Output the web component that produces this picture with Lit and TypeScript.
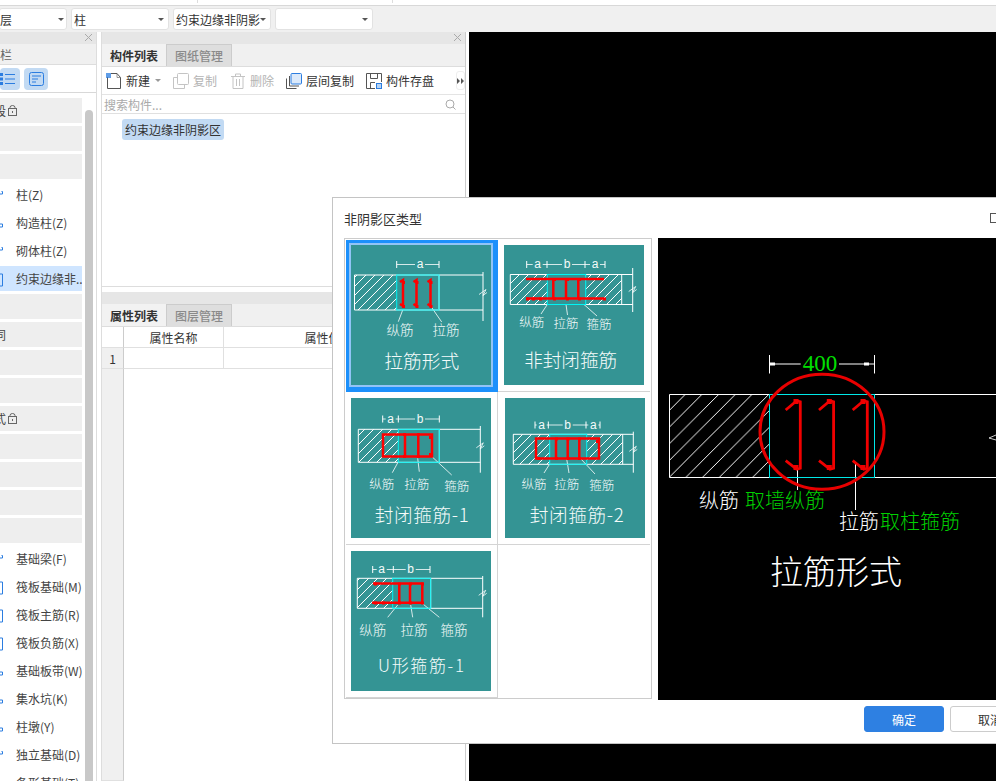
import { LitElement, html, svg, css } from 'lit';
import { customElement, property } from 'lit/decorators.js';

type Seg = [number, number, number, number];

interface Thumb {
  dimY: number;
  ticks: number[];
  dimLabels: [string, number][];
  top: number;
  bottom: number;
  left: number;
  wallEnd: number;
  cutX: number;
  cutTop: number;
  cutBottom: number;
  hatch: [number, number][];
  cyan: [number, number];
  red: string;
  dots: [number, number][];
  leaders: Seg[];
  labels: [string, number, number][];
  labelSize: number;
  title: string;
  titleX: number;
  titleY: number;
  titleSize: number;
  titleWidth: number;
}

const THUMBS: Thumb[] = [
  {
    dimY: 19.5,
    ticks: [45.7, 88],
    dimLabels: [['a', 69]],
    top: 30, bottom: 65, left: 3.5, wallEnd: 88, cutX: 132, cutTop: 27, cutBottom: 76,
    hatch: [[3.5, 45.7]],
    cyan: [45.7, 88],
    red: 'M49 37l3-2v26l-3-2M62.5 37l3-2v26l-3-2M76.5 37l3-2v26l-3-2',
    dots: [[51, 36], [64.5, 36], [78.5, 36], [51, 60], [64.5, 60], [78.5, 60]],
    leaders: [[51.7, 65, 47.3, 76.7], [79.7, 61, 90.7, 77]],
    labels: [['纵筋', 49, 85], ['拉筋', 95, 85]],
    labelSize: 13.5,
    title: '拉筋形式', titleX: 70.7, titleY: 116.5, titleSize: 18.7, titleWidth: 75,
  },
  {
    dimY: 19.5,
    ticks: [22.7, 43, 81, 101],
    dimLabels: [['a', 33.7], ['b', 63], ['a', 91]],
    top: 29.5, bottom: 59.5, left: 6.3, wallEnd: 117.7, cutX: 128.7, cutTop: 23, cutBottom: 67,
    hatch: [[6.3, 43.3], [81.7, 117.7]],
    cyan: [43.3, 81.7],
    red: 'M22 34H100M22 53.5H100M49.3 34v19.5M62 34v19.5M74.3 34v19.5',
    dots: [[49, 33], [62, 33], [74, 33], [22, 52.5], [28, 52.5], [35, 52.5], [49, 52.5], [62, 52.5], [74, 52.5], [99, 52.5]],
    leaders: [[43.3, 59.5, 37, 69], [62, 59.5, 63.5, 70], [80, 59.5, 93, 71]],
    labels: [['纵筋', 27.7, 78], ['拉筋', 62, 79], ['箍筋', 95, 80]],
    labelSize: 12.5,
    title: '非封闭箍筋', titleX: 66.7, titleY: 115, titleSize: 18.7, titleWidth: 93,
  },
  {
    dimY: 21,
    ticks: [31.7, 47.3, 88.3],
    dimLabels: [['a', 39.7], ['b', 69]],
    top: 31.3, bottom: 64.3, left: 7.3, wallEnd: 88.3, cutX: 129.3, cutTop: 28, cutBottom: 74.7,
    hatch: [[7.3, 47.3]],
    cyan: [47.3, 88.3],
    red: 'M32 36.5H81V58.5H32ZM54 36.5V58.5M67.3 36.5V58.5',
    dots: [[52, 35], [66, 35], [78, 38], [78, 55], [52, 57], [66, 57]],
    leaders: [[47.3, 63.7, 41.3, 74.7], [66.7, 60.3, 68.3, 73.7], [81, 58.7, 100.7, 77]],
    labels: [['纵筋', 30.7, 87], ['拉筋', 65.7, 87], ['箍筋', 105.7, 88.7]],
    labelSize: 12.5,
    title: '封闭箍筋-1', titleX: 70.7, titleY: 117, titleSize: 18.7, titleWidth: 94,
  },
  {
    dimY: 27,
    ticks: [30, 43.3, 81, 95],
    dimLabels: [['a', 36.7], ['b', 62.7], ['a', 88.3]],
    top: 36.3, bottom: 66.3, left: 8.3, wallEnd: 117.7, cutX: 128.3, cutTop: 33.7, cutBottom: 74.7,
    hatch: [[8.3, 44.7], [81.7, 117.7]],
    cyan: [44.7, 81.7],
    red: 'M31 40.5H94V60.5H31ZM51 40.5V60.5M62.7 40.5V60.5M74.3 40.5V60.5',
    dots: [[50, 39.5], [61.5, 39.5], [73, 39.5], [50, 59], [61.5, 59], [73, 59], [32, 59], [91, 42]],
    leaders: [[44.7, 66, 39, 75], [61.7, 61, 64, 75], [76, 61, 90, 76]],
    labels: [['纵筋', 29, 87], ['拉筋', 61.7, 87], ['箍筋', 96.7, 87.7]],
    labelSize: 12.5,
    title: '封闭箍筋-2', titleX: 71.7, titleY: 117, titleSize: 18.7, titleWidth: 94,
  },
  {
    dimY: 18.5,
    ticks: [21.7, 42.3, 79],
    dimLabels: [['a', 30.7], ['b', 59.7]],
    top: 27.3, bottom: 57.3, left: 6.3, wallEnd: 79.7, cutX: 131.7, cutTop: 25, cutBottom: 66.3,
    hatch: [[6.3, 41.7]],
    cyan: [41.7, 79.7],
    red: 'M22 32.5H71.3V51.7H21M48.3 32.5V51.7M59 32.5V51.7',
    dots: [[23, 31.5], [47, 31.5], [58, 31.5], [70, 31.5], [23, 50.5], [31, 50.5], [47, 50.5], [58, 50.5], [70, 50.5]],
    leaders: [[46.7, 54, 36.7, 66.3], [59.7, 54, 61.7, 66.3], [72.3, 53.3, 88.3, 66.3]],
    labels: [['纵筋', 21.7, 79], ['拉筋', 63, 79], ['箍筋', 103, 79]],
    labelSize: 13.5,
    title: 'U形箍筋-1', titleX: 70, titleY: 115.7, titleSize: 17, titleWidth: 86,
  },
];

const hatchDefs = (step: number) => svg`
  <defs>
    <pattern id="hatch" width=${step} height=${step} patternUnits="userSpaceOnUse">
      <path d="M0 ${step}L${step} 0" stroke="#fff" stroke-width="1" fill="none" shape-rendering="crispEdges"></path>
    </pattern>
  </defs>`;

@customElement('rebar-thumb')
export class RebarThumb extends LitElement {
  @property({ attribute: false }) data!: Thumb;

  static styles = css`
    :host { display: block; width: 140px; height: 140px; background: #349494; }
    svg { display: block; }
    text {
      fill: #f4fbfa;
      text-anchor: middle;
      dominant-baseline: central;
      font-family: "Noto Sans CJK SC", sans-serif;
      font-weight: 300;
    }
    .dim { font-family: "Liberation Sans", sans-serif; font-size: 12px; font-weight: 400; }
  `;

  render() {
    const d = this.data;
    const first = d.ticks[0];
    const last = d.ticks[d.ticks.length - 1];
    const mid = (d.top + d.bottom) / 2;
    return html`<svg width="140" height="140" viewBox="0 0 140 140">
      ${hatchDefs(9)}
      ${d.hatch.map(([a, b]) => svg`<rect x=${a} y=${d.top} width=${b - a} height=${d.bottom - d.top} fill="url(#hatch)"></rect>`)}
      <g stroke="#fff" fill="none">
        <path d="M${d.left} ${d.top}H${d.cutX}M${d.left} ${d.bottom}H${d.cutX}M${d.left} ${d.top}V${d.bottom}"></path>
        <path d="M${d.cutX} ${d.cutTop}V${d.cutBottom}"></path>
        <path d="M${d.cutX - 4} ${mid + 2}L${d.cutX + 3} ${mid - 3}L${d.cutX} ${mid + 3}L${d.cutX + 4} ${mid}" stroke-width="0.8"></path>
        <path d="M${first} ${d.dimY}H${last}" stroke-width="0.8"></path>
        ${d.ticks.map((x) => svg`<path d="M${x} ${d.dimY - 3.5}v7"></path>`)}
        ${d.leaders.map(([a, b, c, e]) => svg`<path d="M${a} ${b}L${c} ${e}" stroke-width="0.8"></path>`)}
        <path d="M${d.wallEnd} ${d.top}V${d.bottom}"></path>
      </g>
      ${d.dimLabels.map(([t, x]) => svg`
        <rect x=${x - 5} y=${d.dimY - 6} width="10" height="12" fill="#349494"></rect>
        <text class="dim" x=${x} y=${d.dimY - 0.5}>${t}</text>`)}
      <rect x=${d.cyan[0]} y=${d.top} width=${d.cyan[1] - d.cyan[0]} height=${d.bottom - d.top} fill="none" stroke="#00f4f4"></rect>
      <path d=${d.red} fill="none" stroke="#ff0000" stroke-width="2.5"></path>
      ${d.dots.map(([x, y]) => svg`<rect x=${x} y=${y} width="3" height="3" fill="#ff0000"></rect>`)}
      ${d.labels.map(([t, x, y]) => svg`<text x=${x} y=${y - 1.5} font-size=${d.labelSize}>${t}</text>`)}
      <text x=${d.titleX} y=${d.titleY - 2} font-size=${d.titleSize} textLength=${d.titleWidth}>${d.title}</text>
    </svg>`;
  }
}

@customElement('rebar-preview')
export class RebarPreview extends LitElement {
  static styles = css`
    :host { display: block; width: 100%; height: 462px; background: #000; overflow: hidden; }
    svg { display: block; }
    text { font-family: "Noto Sans CJK SC", sans-serif; font-weight: 300; font-size: 20px; fill: #fff; }
    .green { fill: #00d000; }
    .num { font-family: "Liberation Serif", serif; font-size: 23px; font-weight: 400; fill: #00e000; text-anchor: middle; }
    .big { font-size: 33px; }
  `;

  render() {
    const tie = (dx: number) => svg`
      <path d="M${127.7 + dx} 172L${138.7 + dx} 162.7L${142.3 + dx} 163.7V230.3L${138.7 + dx} 231.3L${127.7 + dx} 222.7"
        fill="none" stroke="#f00000" stroke-width="2.8"></path>
      <rect x=${135.5 + dx} y="161" width="5" height="5" fill="#f00000"></rect>
      <rect x=${135.5 + dx} y="227" width="5" height="5" fill="#f00000"></rect>`;
    return html`<svg width="338" height="462" viewBox="0 0 338 462">
      ${hatchDefs(16.7)}
      <rect x="11.3" y="156.3" width="100" height="83" fill="url(#hatch)"></rect>
      <g stroke="#fff" fill="none">
        <path d="M11.5 156.5H338M11.5 239.5H338M11.5 156.5V239.5"></path>
        <path d="M111.5 117V135.5M216.5 117V135.5M111.5 126H142.7M181 126H216.5"></path>
        <path d="M139.5 230V252M197.5 226V272"></path>
        <path d="M331 200L338 197M331 200L338 202" stroke-width="0.8"></path>
      </g>
      <path d="M112 124.5h5v3h-5zM206 124.5h5v3h-5z" fill="#fff"></path>
      <text class="num" x="162" y="133">400</text>
      <rect x="111.5" y="156.5" width="105" height="83" fill="none" stroke="#00e8e8"></rect>
      ${[0, 33.3, 67].map(tie)}
      <ellipse cx="164" cy="193.7" rx="62" ry="57.5" fill="none" stroke="#e80000" stroke-width="3"></ellipse>
      <text x="41" y="270">纵筋</text>
      <text class="green" x="87" y="270">取墙纵筋</text>
      <text x="181" y="291">拉筋</text>
      <text class="green" x="222" y="291">取柱箍筋</text>
      <text class="big" x="112" y="346">拉筋形式</text>
    </svg>`;
  }
}

interface TreeRow {
  label?: string;
  lock?: boolean;
  selected?: boolean;
  clip?: boolean;
  stub?: string;
}

const stubA = 'M0 7h2.5v-2.5h-1';
const stubB = 'M0 3h2.5v12h-2.5';
const stubC = 'M0 9h2.5v3h-2.5';

const TREE: TreeRow[] = [
  { label: '段', lock: true, clip: true },
  {},
  {},
  { label: '柱(Z)', stub: stubA },
  { label: '构造柱(Z)', stub: stubC },
  { label: '砌体柱(Z)', stub: stubA },
  { label: '约束边缘非...', selected: true, stub: stubB },
  {},
  { label: '同', clip: true },
  {},
  {},
  { label: '式', lock: true, clip: true },
  {},
  {},
  {},
  {},
  { label: '基础梁(F)', stub: stubA },
  { label: '筏板基础(M)', stub: stubB },
  { label: '筏板主筋(R)', stub: stubB },
  { label: '筏板负筋(X)', stub: stubB },
  { label: '基础板带(W)', stub: stubC },
  { label: '集水坑(K)', stub: stubC },
  { label: '柱墩(Y)', stub: stubC },
  { label: '独立基础(D)', stub: stubA },
  { label: '条形基础(T)' },
];

@customElement('app-root')
export class AppRoot extends LitElement {
  static styles = css`
    :host {
      display: block;
      position: relative;
      width: 996px;
      height: 781px;
      overflow: hidden;
      background: #fff;
      font-family: "Noto Sans CJK SC", "Liberation Sans", sans-serif;
      font-size: 12px;
      color: #333;
    }
    .strip { height: 5px; border-bottom: 1px solid #d8d8d8; display: flex; }
    .strip i { width: 1px; height: 3px; background: #ddd; margin-left: 197px; }
    .strip i + i { margin-left: 194px; }
    .combos { height: 26px; background: #f0f0f0; display: flex; gap: 4px; padding-top: 2px; box-sizing: border-box; }
    .combo {
      width: 98px; height: 22px; box-sizing: border-box; background: #fff; border: 1px solid #e2e2e2;
      border-radius: 3px; display: flex; align-items: center; padding: 0 2px; white-space: nowrap; overflow: hidden;
    }
    .combo:first-child { width: 68px; margin-left: -1px; padding: 0; }
    .combo span { flex: 1; min-width: 0; }
    .combo::after {
      content: ''; border: 3px solid transparent; border-top: 3px solid #555; margin: 3px 2px 0 0;
    }
    .work { display: flex; height: 749px; }

    .left { width: 97px; box-sizing: border-box; border-right: 1px solid #ddd; flex: none; display: flex; flex-direction: column; }
    .bar { height: 12px; flex: none; background: #e6e6e6; position: relative; }
    .bar svg { position: absolute; right: 3px; top: 1px; }
    .left-title { height: 21px; background: #f0f0f0; border-bottom: 1px solid #ddd; box-sizing: border-box; display: flex; align-items: center; font-size: 12px; color: #666; }
    .left-tools { height: 28px; display: flex; gap: 4px; align-items: center; border-bottom: 1px solid #d8d8d8; box-sizing: border-box; flex: none; }
    .tool-on { height: 22px; background: #c2daf3; border-radius: 4px; display: flex; align-items: center; justify-content: center; }
    .tool-on.a { width: 20px; }
    .tool-on.b { width: 24px; }
    .tree-wrap { flex: 1; min-height: 0; display: flex; overflow: hidden; padding-top: 5px; }
    .tree { width: 82px; flex: none; display: flex; flex-direction: column; gap: 3px; }
    .row { height: 25px; flex: none; display: flex; align-items: center; padding-left: 16px; white-space: nowrap; overflow: hidden; position: relative; color: #444; }
    .row.group { background: #eee; padding-left: 0; gap: 2px; }
    .row.sel { background: #cfe5ff; }
    .row .cut { margin-left: -6px; }
    .row .stub { position: absolute; left: 0; top: 5px; }
    .thumb-track { width: 15px; flex: none; padding: 12px 3px 0; box-sizing: border-box; }
    .thumb-track div { width: 8px; height: 100%; background: #c8c8c8; border-radius: 4px 4px 0 0; }

    .split { width: 4px; flex: none; }
    .mid { width: 365px; flex: none; box-sizing: border-box; border-left: 1px solid #ddd; border-right: 1px solid #ccc; display: flex; flex-direction: column; }
    .tabs { height: 23px; flex: none; background: #f0f0f0; border-bottom: 1px solid #ddd; box-sizing: border-box; display: flex; }
    .tab { width: 65px; height: 22px; box-sizing: border-box; display: flex; align-items: center; justify-content: center; font-weight: 700; color: #333; border-right: 1px solid #ccc; background: #f2f2f2; }
    .tab.off { background: #dedede; color: #8a8a8a; font-weight: 500; border-top: 1px solid #ccc; }
    .actions { height: 28px; flex: none; display: flex; align-items: center; padding-left: 4px; border-bottom: 1px solid #e4e4e4; box-sizing: border-box; position: relative; }
    .act { display: flex; align-items: center; gap: 4px; white-space: nowrap; color: #333; margin-right: 12px; }
    .act.off { color: #b4b4b4; }
    .act.wide { margin-right: 13px; }
    .act .caret { border: 3px solid transparent; border-top: 3px solid #999; margin-top: 3px; margin-left: 1px; }
    .more { position: absolute; right: 0; top: 4px; width: 9px; height: 19px; box-sizing: border-box; border: 1px solid #eee; border-radius: 3px; display: flex; align-items: center; justify-content: center; }
    .search { height: 19px; flex: none; border-bottom: 1px solid #e0e0e0; box-sizing: border-box; display: flex; align-items: center; justify-content: space-between; padding: 0 9px 0 2px; color: #aaa; }
    .list { height: 173px; flex: none; border-bottom: 1px solid #ddd; box-sizing: border-box; padding: 5px 0 0 20px; }
    .pill { display: inline-block; height: 21px; line-height: 21px; padding: 0 3px; background: #c2daf3; border-radius: 3px; }
    .gap { height: 5px; flex: none; }
    .props { flex: 1; display: grid; grid-template-columns: 22px 100px 198px 1fr; grid-template-rows: 21px 21px 1fr; }
    .props > div { box-sizing: border-box; border-right: 1px solid #e0e0e0; border-bottom: 1px solid #e0e0e0; display: flex; align-items: center; justify-content: center; }
    .props .side { background: #f0f0f0; border-right: 1px solid #ccc; }
    .props .corner { background: #fff; }
    .props .head { color: #333; }
    .props .fill { border: none; }
    .gutter { width: 3px; flex: none; }
    .canvas { flex: 1; background: #000; }

    .dialog {
      position: absolute; left: 332px; top: 197px; width: 700px; height: 547px; box-sizing: border-box;
      background: #fff; border: 1px solid #c4c4c4; padding: 0 11px; display: flex; flex-direction: column;
    }
    .d-head { height: 40px; flex: none; display: flex; align-items: center; font-size: 13px; color: #333; position: relative; }
    .d-max { position: absolute; left: 646px; top: 15px; width: 7px; height: 8px; border: 1px solid #555; }
    .d-body { display: flex; gap: 6px; flex: none; }
    .grid {
      width: 308px; height: 461px; box-sizing: border-box; border: 1px solid #ccc; padding: 1px;
      display: grid; grid-template-columns: 152px 152px; grid-template-rows: 152px 153px 153px;
    }
    .cell { box-sizing: border-box; border-right: 1px solid #d4d4d4; border-bottom: 1px solid #d4d4d4; padding: 5px; }
    .cell:nth-child(2n) { border-right: none; padding-left: 6px; }
    .cell:nth-child(n+3) { padding-top: 6px; }
    .cell:nth-child(4) { padding-left: 7px; }
    .cell.sel { padding: 0; border: 3px solid #1c90fb; background: #1c90fb; }
    .cell.sel div { border: 2px solid #92c4f6; width: 140px; height: 140px; }
    .cell.blank { border: none; }
    .preview { width: 338px; flex: none; }
    .d-foot { flex: 1; display: flex; gap: 6px; padding: 6px 0 0 520px; }
    .btn { width: 80px; height: 26px; flex: none; box-sizing: border-box; border-radius: 3px; display: flex; align-items: center; justify-content: center; background: #fff; border: 1px solid #ccc; }
    .btn.primary { background: #2e80e2; border-color: #2e80e2; color: #fff; }
  `;

  private icon(kind: string) {
    const blue = '#2b7de0';
    const gray = '#c4c4c4';
    const dark = '#555';
    switch (kind) {
      case 'new':
        return html`<svg width="16" height="16" viewBox="0 0 16 16" fill="none"><path d="M1.5 4V15.5H14.5V4.5L11 .5H5" stroke=${dark}></path><path d="M11 .5V4.5H14.5" stroke=${dark} stroke-width="0.6"></path><rect x="0" y="0" width="5" height="5" fill=${blue} opacity="0.75"></rect></svg>`;
      case 'copy':
        return html`<svg width="16" height="16" viewBox="0 0 16 16" fill="none" stroke=${gray}><rect x="4.5" y=".5" width="11" height="11" rx="1"></rect><path d="M4 4.5H.5V15.5H11.5V12"></path></svg>`;
      case 'trash':
        return html`<svg width="16" height="16" viewBox="0 0 16 16" fill="none" stroke=${gray}><path d="M1 3.5H15M5.5 3.5V1H10.5V3.5M3 3.5V15.5H13V3.5M6.5 6V13M9.5 6V13"></path></svg>`;
      case 'floor':
        return html`<svg width="16" height="16" viewBox="0 0 16 16" fill="none"><rect x="5" y=".5" width="10.5" height="10.5" rx="1" fill="#dbe9fa" stroke=${blue}></rect><path d="M3.5 3V13H13M.5 5.5V15.5H10.5" stroke=${dark}></path></svg>`;
      default:
        return html`<svg width="16" height="16" viewBox="0 0 16 16" fill="none"><path d="M9 15.5H.5V.5H15.5V9" stroke=${dark}></path><path d="M4.5 .5V5.5H11.5V.5M4.5 15.5V9.5H9" stroke=${dark}></path><rect x="10.5" y="10.5" width="5" height="5" fill="#b6d4f5" stroke=${blue}></rect></svg>`;
    }
  }

  private closeX() {
    return html`<svg width="9" height="9" viewBox="0 0 9 9"><path d="M1 1L8 8M8 1L1 8" stroke="#aaa" fill="none"></path></svg>`;
  }

  private tree() {
    return TREE.map((r) => {
      const grouped = !r.stub && r.label !== '条形基础(T)';
      return html`<div class="row ${grouped ? 'group' : ''} ${r.selected ? 'sel' : ''}">
        ${r.stub
          ? html`<svg class="stub" width="4" height="16" viewBox="0 0 4 16"><path d=${r.stub} fill="none" stroke="#2b7de0"></path></svg>`
          : ''}
        ${r.label ? html`<span class=${r.clip ? 'cut' : ''}>${r.label}</span>` : ''}
        ${r.lock
          ? html`<svg width="9" height="11" viewBox="0 0 9 11" fill="none" stroke="#666"><rect x=".5" y="3.5" width="8" height="7"></rect><path d="M2 3.5V2.5A2.5 2 0 0 1 7 2.5V3.5"></path><path d="M4.5 6v2"></path></svg>`
          : ''}
      </div>`;
    });
  }

  render() {
    return html`
      <div class="strip"><i></i><i></i></div>
      <div class="combos">
        <div class="combo"><span>层</span></div>
        <div class="combo"><span>柱</span></div>
        <div class="combo"><span>约束边缘非阴影</span></div>
        <div class="combo"><span></span></div>
      </div>
      <div class="work">
        <div class="left">
          <div class="bar">${this.closeX()}</div>
          <div class="left-title">栏</div>
          <div class="left-tools">
            <div class="tool-on a">
              <svg width="20" height="14" viewBox="0 0 20 14" fill="none" stroke="#2b7de0"><path d="M5 2.5H15M5 7H15M5 11.500H15"></path><path d="M0 1h3v3H0zM0 5.5h3v3H0zM0 10h3v3H0z" fill="#2b7de0" stroke="none"></path></svg>
            </div>
            <div class="tool-on b">
              <svg width="15" height="14" viewBox="0 0 15 14" fill="none" stroke="#2b7de0"><rect x=".5" y=".5" width="14" height="13" rx="2"></rect><path d="M3 4H12M3 7H9M3 10H7"></path></svg>
            </div>
          </div>
          <div class="tree-wrap">
            <div class="tree">${this.tree()}</div>
            <div class="thumb-track"><div></div></div>
          </div>
        </div>
        <div class="split"></div>
        <div class="mid">
          <div class="bar">${this.closeX()}</div>
          <div class="tabs"><div class="tab">构件列表</div><div class="tab off">图纸管理</div></div>
          <div class="actions">
            <div class="act">${this.icon('new')}新建<i class="caret"></i></div>
            <div class="act off wide">${this.icon('copy')}复制</div>
            <div class="act off">${this.icon('trash')}删除</div>
            <div class="act">${this.icon('floor')}层间复制</div>
            <div class="act">${this.icon('save')}构件存盘</div>
            <div class="more"><svg width="7" height="6" viewBox="0 0 7 6"><path d="M0 0L3 3L0 6ZM4 0L7 3L4 6Z" fill="#555"></path></svg></div>
          </div>
          <div class="search">
            <span>搜索构件...</span>
            <svg width="11" height="11" viewBox="0 0 11 11" fill="none" stroke="#aaa"><circle cx="5" cy="5" r="4"></circle><path d="M8 8L10.5 10.5"></path></svg>
          </div>
          <div class="list"><span class="pill">约束边缘非阴影区</span></div>
          <div class="gap"></div>
          <div class="bar"></div>
          <div class="tabs"><div class="tab">属性列表</div><div class="tab off">图层管理</div></div>
          <div class="props">
            <div class="side corner"></div><div class="head">属性名称</div><div class="head">属性值</div><div></div>
            <div class="side">1</div><div></div><div></div><div></div>
            <div class="side"></div><div class="fill"></div><div class="fill"></div><div class="fill"></div>
          </div>
        </div>
        <div class="gutter"></div>
        <div class="canvas"></div>
      </div>
      <div class="dialog">
        <div class="d-head">非阴影区类型<i class="d-max"></i></div>
        <div class="d-body">
          <div class="grid">
            <div class="cell sel"><div><rebar-thumb .data=${THUMBS[0]}></rebar-thumb></div></div>
            ${THUMBS.slice(1).map((t) => html`<div class="cell"><rebar-thumb .data=${t}></rebar-thumb></div>`)}
            <div class="cell blank"></div>
          </div>
          <div class="preview"><rebar-preview></rebar-preview></div>
        </div>
        <div class="d-foot">
          <div class="btn primary">确定</div>
          <div class="btn">取消</div>
        </div>
      </div>
    `;
  }
}
